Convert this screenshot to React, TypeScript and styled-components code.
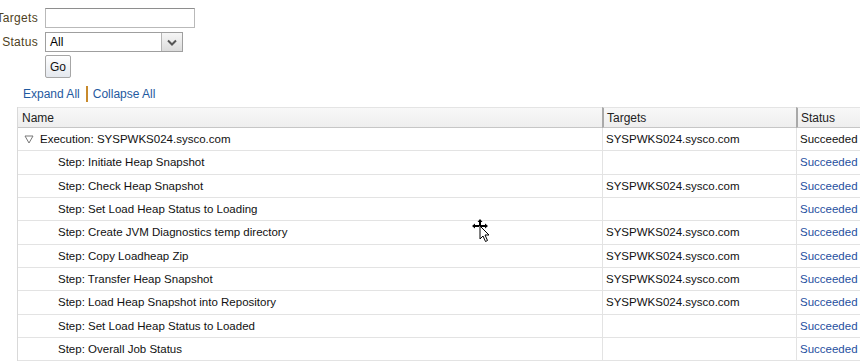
import React from "react";
import styled, { createGlobalStyle } from "styled-components";

const Global = createGlobalStyle`
  html, body { margin: 0; padding: 0; background: #fff; overflow: hidden; }
  body { font-family: "Liberation Sans", sans-serif; font-size: 12px; color: #000; }
`;

const Page = styled.div`
  width: 860px;
  height: 363px;
  position: relative;
  overflow: hidden;
`;

const Form = styled.div`
  display: grid;
  grid-template-columns: 54px auto;
  column-gap: 7px;
  row-gap: 4px;
  margin-left: -16px;
  padding-top: 8px;
  align-items: center;
  justify-content: start;
`;

const Label = styled.label`
  text-align: right;
  color: #4f3f22;
  font-family: "Liberation Sans", sans-serif;
  font-size: 12px;
  white-space: nowrap;
  letter-spacing: 0.3px;
`;

const TextInput = styled.div`
  width: 148px;
  height: 18px;
  border: 1px solid #b9b9b9;
  border-top-color: #8e8e8e;
  background: #fff;
`;

const Select = styled.div`
  width: 136px;
  height: 18px;
  border: 1px solid #9f9f9f;
  display: flex;
  align-items: stretch;
  background: #fff;
`;

const SelectValue = styled.div`
  flex: 1;
  padding-left: 4px;
  display: flex;
  align-items: center;
  font-size: 12px;
  color: #000;
`;

const SelectButton = styled.div`
  width: 20px;
  border-left: 1px solid #b5b5b5;
  background: linear-gradient(#f6f6f6, #dcdcdc);
  display: flex;
  align-items: center;
  justify-content: center;
`;

const Spacer = styled.div``;

const GoButton = styled.div`
  width: 24px;
  height: 21px;
  border: 1px solid #a6a6a6;
  border-radius: 2px;
  background: linear-gradient(#ffffff, #e4e8ee);
  display: flex;
  align-items: center;
  justify-content: center;
  font-size: 12px;
  color: #111;
  margin-top: -1px;
`;

const Links = styled.div`
  display: flex;
  align-items: center;
  padding-left: 23px;
  margin-top: 8px;
  height: 16px;
  font-size: 12px;
`;

const LinkText = styled.span`
  color: #1f5aa0;
`;

const Sep = styled.span`
  display: inline-block;
  width: 2px;
  height: 16px;
  background: #c88a2c;
  margin: 0 5px 0 6px;
`;

const Table = styled.div`
  margin-left: 17px;
  margin-top: 5px;
  width: 880px;
  border-left: 1px solid #d9d9d9;
  display: grid;
  grid-template-columns: 584px 194px 1fr;
  font-size: 11.5px;
`;

const HeadCell = styled.div<{ $first?: boolean }>`
  height: 19px;
  display: flex;
  align-items: center;
  padding-left: ${(p) => (p.$first ? 4 : 3)}px;
  background: linear-gradient(#f8f8f8, #eeeeee);
  border-top: 1px solid #e4e4e4;
  border-bottom: 1px solid #c6c6c6;
  border-left: ${(p) => (p.$first ? "none" : "2px solid #a9a9a9")};
  color: #222;
  font-size: 12px;
`;

const Cell = styled.div<{ $indent?: number; $first?: boolean }>`
  height: 22.33px;
  display: flex;
  align-items: center;
  padding-left: ${(p) => p.$indent ?? 4}px;
  border-bottom: 1px solid #e3e3e3;
  border-left: ${(p) => (p.$first ? "none" : "1px solid #e3e3e3")};
  white-space: nowrap;
  color: #111;
`;

const Status = styled.span<{ $link?: boolean }>`
  color: ${(p) => (p.$link ? "#1f4fa0" : "#111")};
`;

const Disclose = styled.svg`
  margin-right: 6px;
  flex: none;
`;

const Cursor = styled.svg`
  position: absolute;
  left: 472px;
  top: 219px;
`;

const T = "SYSPWKS024.sysco.com";
const rows: { name: string; target: string }[] = [
  { name: "Step: Initiate Heap Snapshot", target: "" },
  { name: "Step: Check Heap Snapshot", target: T },
  { name: "Step: Set Load Heap Status to Loading", target: "" },
  { name: "Step: Create JVM Diagnostics temp directory", target: T },
  { name: "Step: Copy Loadheap Zip", target: T },
  { name: "Step: Transfer Heap Snapshot", target: T },
  { name: "Step: Load Heap Snapshot into Repository", target: T },
  { name: "Step: Set Load Heap Status to Loaded", target: "" },
  { name: "Step: Overall Job Status", target: "" },
];

export default function App() {
  return (
    <Page>
      <Global />
      <Form>
        <Label>Targets</Label>
        <TextInput />
        <Label>Status</Label>
        <Select>
          <SelectValue>All</SelectValue>
          <SelectButton>
            <svg width="10" height="7" viewBox="0 0 10 7">
              <path d="M1 1.5 L5 5.5 L9 1.5" stroke="#555" strokeWidth="2" fill="none" />
            </svg>
          </SelectButton>
        </Select>
        <Spacer />
        <GoButton>Go</GoButton>
      </Form>
      <Links>
        <LinkText>Expand All</LinkText>
        <Sep />
        <LinkText>Collapse All</LinkText>
      </Links>
      <Table>
        <HeadCell $first>Name</HeadCell>
        <HeadCell>Targets</HeadCell>
        <HeadCell>Status</HeadCell>

        <Cell $first $indent={6}>
          <Disclose width="10" height="9" viewBox="0 0 10 9">
            <path d="M1 1 L9 1 L5 8 Z" stroke="#777" strokeWidth="1" fill="none" />
          </Disclose>
          Execution: {T}
        </Cell>
        <Cell $indent={3}>{T}</Cell>
        <Cell $indent={3}>
          <Status>Succeeded</Status>
        </Cell>

        {rows.map((r) => (
          <React.Fragment key={r.name}>
            <Cell $first $indent={40}>{r.name}</Cell>
            <Cell $indent={3}>{r.target}</Cell>
            <Cell $indent={3}>
              <Status $link>Succeeded</Status>
            </Cell>
          </React.Fragment>
        ))}
      </Table>
      <Cursor width="22" height="24" viewBox="0 0 22 24">
        <g fill="#000">
          <path d="M8 0 L10.5 3 L9 3 L9 7 L7 7 L7 3 L5.5 3 Z" />
          <path d="M0 7 L3 4.5 L3 6 L7 6 L7 8 L3 8 L3 9.5 Z" />
          <path d="M16 7 L13 4.5 L13 6 L9 6 L9 8 L13 8 L13 9.5 Z" />
        </g>
        <path
          d="M8 7 L8 20 L11 17 L13.5 22.5 L15.5 21.5 L13 16 L17 16 Z"
          fill="#fff"
          stroke="#000"
          strokeWidth="1"
          strokeLinejoin="miter"
        />
      </Cursor>
    </Page>
  );
}
